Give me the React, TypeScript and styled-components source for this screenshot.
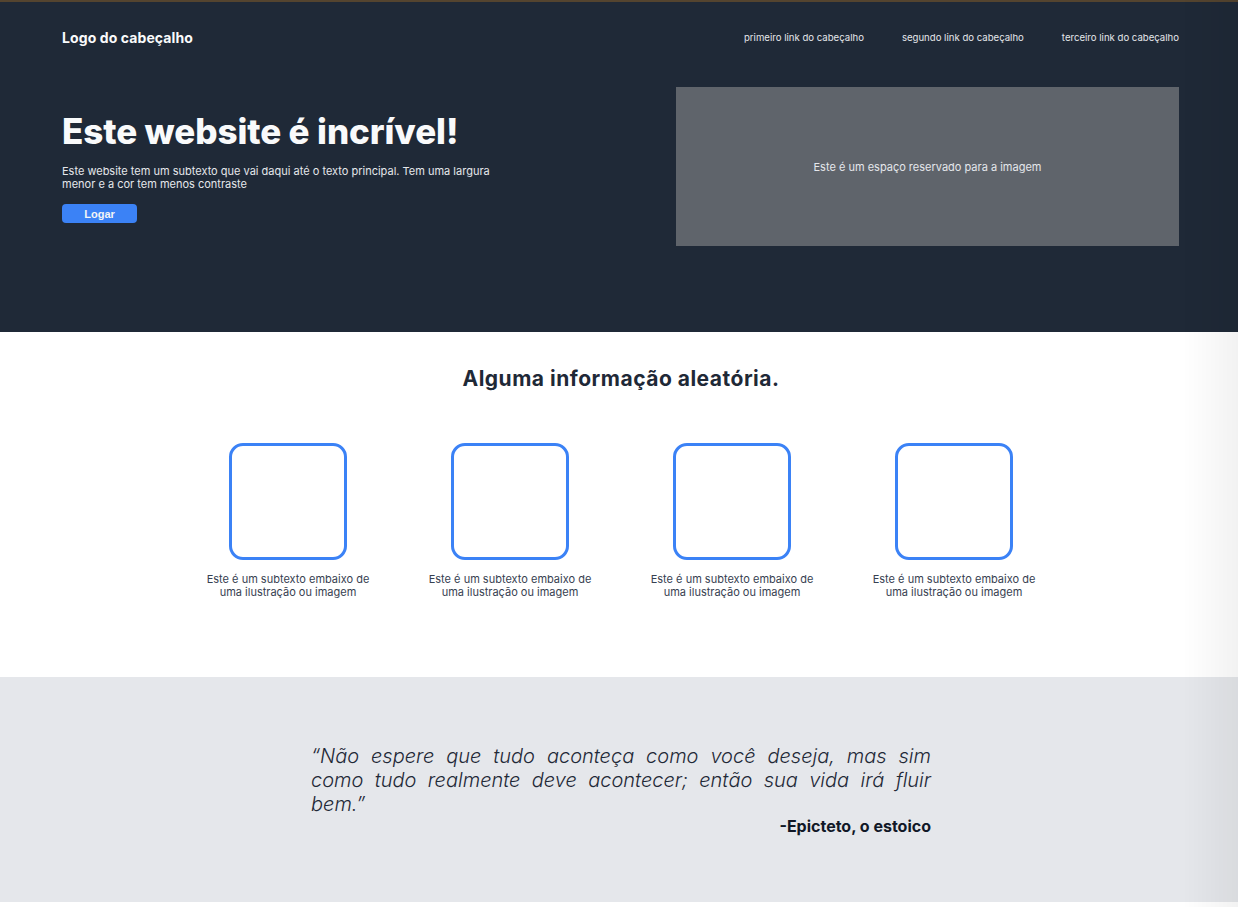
import React from "react";
import styled, { createGlobalStyle } from "styled-components";

const GlobalStyle = createGlobalStyle`
  * {
    box-sizing: border-box;
    margin: 0;
    padding: 0;
  }
  body {
    font-family: Inter, "Open Sans", sans-serif;
    background: #ffffff;
  }
`;

const Page = styled.div`
  border-top: 2px solid #54442f;
`;

const Hero = styled.header`
  background-color: #1f2937;
  padding: 0 59px 86px 62px;
`;

const Nav = styled.nav`
  height: 72px;
  padding-bottom: 2px;
  display: flex;
  align-items: center;
  justify-content: space-between;
`;

const Logo = styled.div`
  color: #f9fafb;
  font-size: 14px;
  font-weight: 700;
  letter-spacing: 0.1px;
`;

const NavLinks = styled.ul`
  list-style: none;
  display: flex;
  gap: 38px;
`;

const NavLink = styled.li`
  color: #e5e7eb;
  font-size: 9.6px;
`;

const HeroBody = styled.div`
  display: flex;
  align-items: center;
  justify-content: space-between;
  margin-top: 13px;
`;

const HeroText = styled.div`
  width: 450px;
  display: flex;
  flex-direction: column;
  align-items: flex-start;
  padding-top: 2px;
`;

const Title = styled.h1`
  color: #f9fafb;
  font-size: 35px;
  font-weight: 800;
  line-height: 38px;
  letter-spacing: -0.1px;
`;

const Subtitle = styled.p`
  color: #e5e7eb;
  font-size: 11px;
  line-height: 13px;
  margin-top: 15px;
`;

const Button = styled.button`
  margin-top: 13px;
  width: 75px;
  height: 19px;
  border: none;
  border-radius: 4px;
  background-color: #3b82f6;
  color: #f3f4f6;
  font-family: "Liberation Sans", Arial, sans-serif;
  font-weight: 700;
  font-size: 11px;
`;

const ImagePlaceholder = styled.div`
  width: 503px;
  height: 159px;
  background-color: #5f646b;
  display: flex;
  align-items: center;
  justify-content: center;
  color: #e5e7eb;
  font-size: 11px;
`;

const Info = styled.section`
  background: #ffffff;
  padding: 35px 0 78px 4px;
  display: flex;
  flex-direction: column;
  align-items: center;
`;

const InfoTitle = styled.h2`
  color: #1f2937;
  font-size: 21px;
  font-weight: 700;
  line-height: 24px;
  letter-spacing: 0.5px;
`;

const Cards = styled.div`
  display: grid;
  grid-template-columns: repeat(4, 222px);
  margin-top: 52px;
`;

const Card = styled.div`
  display: flex;
  flex-direction: column;
  align-items: center;
`;

const IconBox = styled.div`
  width: 118px;
  height: 117px;
  border: 3px solid #3b82f6;
  border-radius: 14px;
`;

const CardText = styled.p`
  margin-top: 13px;
  width: 170px;
  text-align: center;
  color: #374151;
  font-size: 11px;
  line-height: 13px;
`;

const QuoteSection = styled.section`
  background-color: #e5e7eb;
  height: 225px;
  display: flex;
  justify-content: center;
  padding: 67px 0 0 4px;
`;

const QuoteBox = styled.figure`
  width: 620px;
  display: flex;
  flex-direction: column;
`;

const Quote = styled.blockquote`
  font-size: 20px;
  font-style: italic;
  font-weight: 300;
  line-height: 24px;
  color: #1f2937;
  text-align: justify;
`;

const Author = styled.figcaption`
  align-self: flex-end;
  font-size: 16px;
  font-weight: 700;
  color: #111827;
  line-height: 20px;
`;

const EdgeShade = styled.div`
  position: fixed;
  top: 0;
  right: 0;
  width: 55px;
  height: 100%;
  pointer-events: none;
  background: linear-gradient(to right, rgba(0, 0, 0, 0), rgba(0, 0, 0, 0.05));
`;

const cards = [1, 2, 3, 4];

export default function App() {
  return (
    <Page>
      <GlobalStyle />
      <Hero>
        <Nav>
          <Logo>Logo do cabeçalho</Logo>
          <NavLinks>
            <NavLink>primeiro link do cabeçalho</NavLink>
            <NavLink>segundo link do cabeçalho</NavLink>
            <NavLink>terceiro link do cabeçalho</NavLink>
          </NavLinks>
        </Nav>
        <HeroBody>
          <HeroText>
            <Title>Este website é incrível!</Title>
            <Subtitle>
              Este website tem um subtexto que vai daqui até o texto principal. Tem uma largura menor e a cor tem
              menos contraste
            </Subtitle>
            <Button>Logar</Button>
          </HeroText>
          <ImagePlaceholder>Este é um espaço reservado para a imagem</ImagePlaceholder>
        </HeroBody>
      </Hero>

      <Info>
        <InfoTitle>Alguma informação aleatória.</InfoTitle>
        <Cards>
          {cards.map((n) => (
            <Card key={n}>
              <IconBox />
              <CardText>Este é um subtexto embaixo de uma ilustração ou imagem</CardText>
            </Card>
          ))}
        </Cards>
      </Info>

      <QuoteSection>
        <QuoteBox>
          <Quote>
            “Não espere que tudo aconteça como você deseja, mas sim como tudo realmente deve acontecer; então sua
            vida irá fluir bem.”
          </Quote>
          <Author>-Epicteto, o estoico</Author>
        </QuoteBox>
      </QuoteSection>
      <EdgeShade />
    </Page>
  );
}
